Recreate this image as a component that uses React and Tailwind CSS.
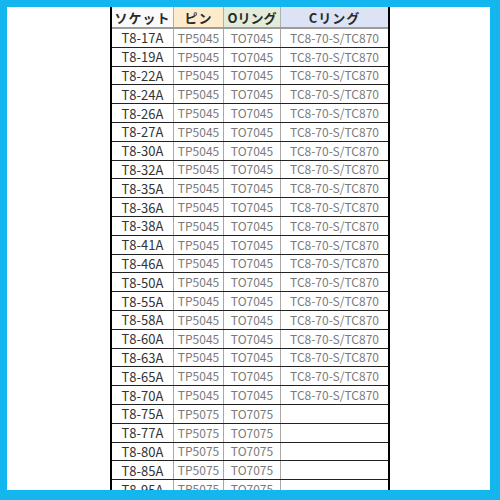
import React from 'react';

const rows = [
  ['T8-17A', 'TP5045', 'TO7045', 'TC8-70-S/TC870'],
  ['T8-19A', 'TP5045', 'TO7045', 'TC8-70-S/TC870'],
  ['T8-22A', 'TP5045', 'TO7045', 'TC8-70-S/TC870'],
  ['T8-24A', 'TP5045', 'TO7045', 'TC8-70-S/TC870'],
  ['T8-26A', 'TP5045', 'TO7045', 'TC8-70-S/TC870'],
  ['T8-27A', 'TP5045', 'TO7045', 'TC8-70-S/TC870'],
  ['T8-30A', 'TP5045', 'TO7045', 'TC8-70-S/TC870'],
  ['T8-32A', 'TP5045', 'TO7045', 'TC8-70-S/TC870'],
  ['T8-35A', 'TP5045', 'TO7045', 'TC8-70-S/TC870'],
  ['T8-36A', 'TP5045', 'TO7045', 'TC8-70-S/TC870'],
  ['T8-38A', 'TP5045', 'TO7045', 'TC8-70-S/TC870'],
  ['T8-41A', 'TP5045', 'TO7045', 'TC8-70-S/TC870'],
  ['T8-46A', 'TP5045', 'TO7045', 'TC8-70-S/TC870'],
  ['T8-50A', 'TP5045', 'TO7045', 'TC8-70-S/TC870'],
  ['T8-55A', 'TP5045', 'TO7045', 'TC8-70-S/TC870'],
  ['T8-58A', 'TP5045', 'TO7045', 'TC8-70-S/TC870'],
  ['T8-60A', 'TP5045', 'TO7045', 'TC8-70-S/TC870'],
  ['T8-63A', 'TP5045', 'TO7045', 'TC8-70-S/TC870'],
  ['T8-65A', 'TP5045', 'TO7045', 'TC8-70-S/TC870'],
  ['T8-70A', 'TP5045', 'TO7045', 'TC8-70-S/TC870'],
  ['T8-75A', 'TP5075', 'TO7075', ''],
  ['T8-77A', 'TP5075', 'TO7075', ''],
  ['T8-80A', 'TP5075', 'TO7075', ''],
  ['T8-85A', 'TP5075', 'TO7075', ''],
  ['T8-95A', 'TP5075', 'TO7075', ''],
];

const font = { fontFamily: '"Noto Sans CJK JP", "Open Sans", sans-serif' };

export default function App() {
  return (
    <div className="w-[500px] h-[500px] bg-[#14b6f0] pt-[7px] pl-[7px] pr-[10px] pb-[10px]">
      <div className="w-full h-full bg-white overflow-hidden pl-[103px]" style={font}>
        <div className="w-[280px] border-x-2 border-black">
          {/* Header */}
          <div className="flex h-[22px] border-b-2 border-[#9c9c9c] text-[13px] font-bold text-[#2a2a2a] leading-none">
            <div className="w-[62px] flex items-center justify-center bg-[#fafafa] border-r border-[#b0b0b0] tracking-[1px]">ソケット</div>
            <div className="w-[50px] flex items-center justify-center bg-[#fdebcb] border-r border-[#b0b0b0] tracking-[1px]">ピン</div>
            <div className="w-[57px] flex items-center justify-center bg-[#e3ecd8] border-r border-[#b0b0b0]">Oリング</div>
            <div className="flex-1 flex items-center justify-center bg-[#dbe3f4] tracking-[1px]">Cリング</div>
          </div>
          {rows.map((r) => (
            <div key={r[0]} className="flex h-[18.8px] border-b border-[#222] leading-none">
              <div className="w-[62px] flex items-center justify-center border-r border-[#a8a8a8] text-[13px] text-[#333]">{r[0]}</div>
              <div className="w-[50px] flex items-center justify-center border-r border-[#a8a8a8] text-[12px] text-[#7a7a7a]">{r[1]}</div>
              <div className="w-[57px] flex items-center justify-center border-r border-[#a8a8a8] text-[12px] text-[#7a7a7a]">{r[2]}</div>
              <div className="flex-1 flex items-center justify-center text-[12px] text-[#7a7a7a]">{r[3]}</div>
            </div>
          ))}
        </div>
      </div>
    </div>
  );
}
